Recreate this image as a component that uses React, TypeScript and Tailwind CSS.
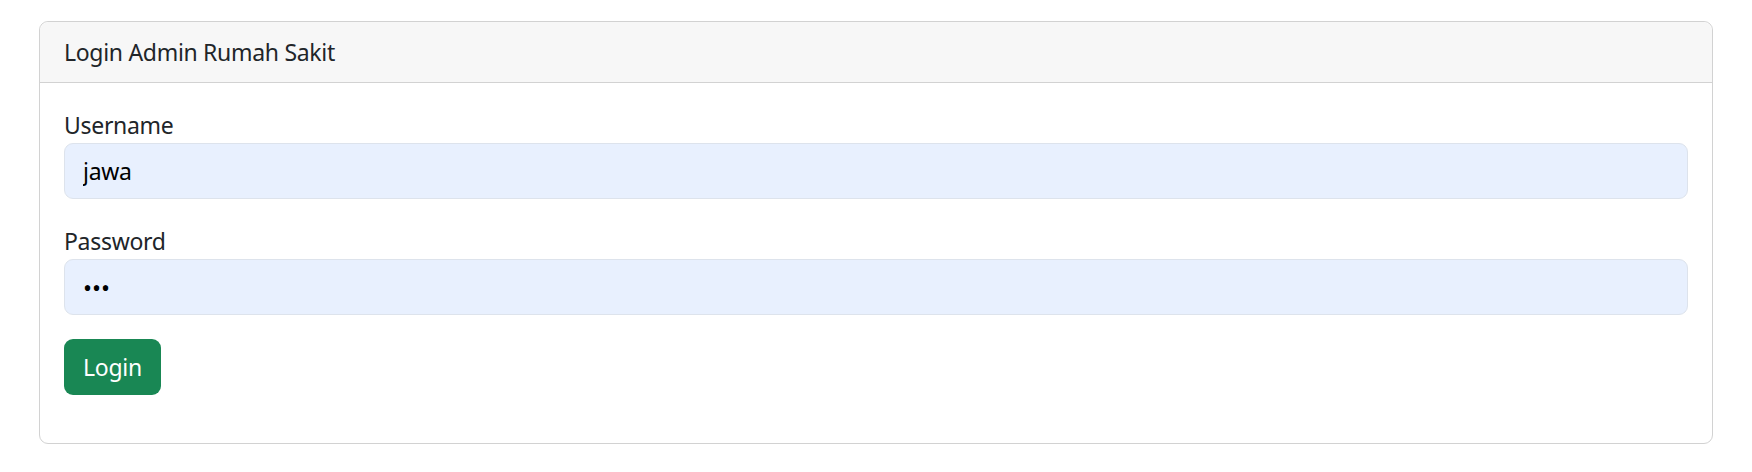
import React from "react";

export default function App() {
  return (
    <div className="min-h-[472px] bg-white px-[39px] pt-[21px] text-[#212529]" style={{ fontFamily: '"Noto Sans", "Open Sans", sans-serif' }}>
      <div className="rounded-[9px] border border-[#d2d2d2] bg-white">
        <div className="h-[61px] rounded-t-[9px] border-b border-[#d2d2d2] bg-[#f7f7f7] px-6 py-3 text-[23px] leading-[36px] tracking-[-0.3px]">
          Login Admin Rumah Sakit
        </div>
        <div className="p-6">
          <div className="mb-6">
            <label className="block text-[23px] leading-[36px] tracking-[-0.3px]">Username</label>
            <input
              type="text"
              readOnly
              defaultValue="jawa"
              className="block h-[56px] w-full rounded-[9px] border border-[#dde3ec] bg-[#e8f0fe] px-[18px] text-[23px] tracking-[-0.3px] text-black outline-none"
            />
          </div>
          <div className="mb-6">
            <label className="block text-[23px] leading-[36px] tracking-[-0.3px]">Password</label>
            <input
              type="password"
              readOnly
              defaultValue="abc"
              className="block h-[56px] w-full rounded-[9px] border border-[#dde3ec] bg-[#e8f0fe] px-[18px] text-[24px] text-black outline-none"
            />
          </div>
          <div className="mb-6">
            <button className="h-[56px] w-[97px] rounded-[9px] bg-[#198754] text-[23px] tracking-[-0.3px] text-white">Login</button>
          </div>
        </div>
      </div>
    </div>
  );
}
